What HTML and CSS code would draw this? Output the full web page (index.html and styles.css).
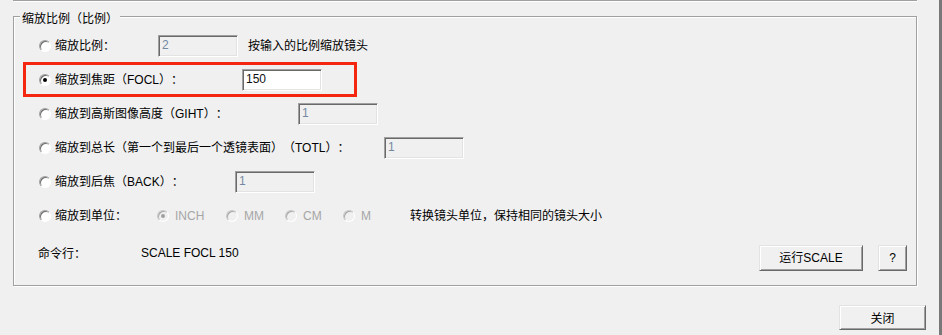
FILE: index.html
```html
<!DOCTYPE html>
<html lang="zh-CN">
<head>
<meta charset="utf-8">
<title>缩放比例</title>
<link rel="stylesheet" href="styles.css">
</head>
<body>
<div class="window">
  <div class="prev-group"></div>
  <div class="group">
    <div class="group-title">缩放比例（比例）</div>
    <div class="highlight"></div>

    <div class="row">
      <span class="radio"></span>
      <span class="label w1">缩放比例：</span>
      <span class="field disabled">2</span>
      <span class="hint">按输入的比例缩放镜头</span>
    </div>

    <div class="row">
      <span class="radio checked"></span>
      <span class="label w2">缩放到焦距（FOCL）：</span>
      <span class="field">150</span>
    </div>

    <div class="row">
      <span class="radio"></span>
      <span class="label w3">缩放到高斯图像高度（GIHT）：</span>
      <span class="field disabled">1</span>
    </div>

    <div class="row">
      <span class="radio"></span>
      <span class="label w4">缩放到总长（第一个到最后一个透镜表面）（TOTL）：</span>
      <span class="field disabled">1</span>
    </div>

    <div class="row">
      <span class="radio"></span>
      <span class="label w5">缩放到后焦（BACK）：</span>
      <span class="field disabled">1</span>
    </div>

    <div class="row">
      <span class="radio"></span>
      <span class="label w6">缩放到单位：</span>
      <span class="opt o-inch"><span class="radio dim checked"></span>INCH</span>
      <span class="opt o-mm"><span class="radio dim"></span>MM</span>
      <span class="opt o-cm"><span class="radio dim"></span>CM</span>
      <span class="opt o-m"><span class="radio dim"></span>M</span>
      <span class="unit-hint">转换镜头单位，保持相同的镜头大小</span>
    </div>

    <div class="cmd">
      <span class="cmd-label">命令行：</span>
      <span class="cmd-text">SCALE FOCL 150</span>
      <span class="btn run">运行SCALE</span>
      <span class="btn help">?</span>
    </div>
  </div>
  <div class="footer">
    <span class="btn close">关闭</span>
  </div>
</div>
</body>
</html>
```

FILE: styles.css
```css
* { box-sizing: border-box; }

html, body {
  margin: 0;
  padding: 0;
  background: #f0f0f0;
}

body {
  font-family: "Liberation Sans", "Noto Sans CJK SC", sans-serif;
  font-size: 12px;
  color: #000;
  width: 942px;
  height: 335px;
  overflow: hidden;
  text-spacing-trim: space-all;
}

.window {
  width: 942px;
  height: 335px;
  border-right: 3px solid #787878;
  background: #f0f0f0;
}

.prev-group {
  margin-left: 13px;
  width: 904px;
  height: 1px;
  background: #a0a0a0;
  box-shadow: 1px 1px 0 #ffffff;
}

.group {
  position: relative;
  margin-top: 15px;
  margin-left: 13px;
  width: 904px;
  height: 270px;
  border: 1px solid #a0a0a0;
  box-shadow: inset 1px 1px 0 #ffffff, 1px 1px 0 #ffffff;
  padding: 12px 9px 0 24px;
}

.group-title {
  position: absolute;
  left: 6px;
  top: -6px;
  padding: 0 2px;
  line-height: 17px;
  background: #f0f0f0;
}

.highlight {
  position: absolute;
  left: 9px;
  top: 45px;
  width: 334px;
  height: 35px;
  border: 3px solid #f5260f;
}

.row {
  display: flex;
  align-items: center;
  height: 34px;
  line-height: 17px;
}

.radio {
  position: relative;
  flex: none;
  width: 12px;
  height: 12px;
  border-radius: 50%;
  background: #ffffff;
  border: 1px solid;
  border-color: #a0a0a0 #ffffff #ffffff #a0a0a0;
  box-shadow: inset 1px 1px 0 #6d6d6d;
  margin-left: 1px;
  margin-right: 4px;
}

.radio.checked::after {
  content: "";
  position: absolute;
  left: 3px;
  top: 3px;
  width: 4px;
  height: 4px;
  border-radius: 50%;
  background: #000;
}

.radio.dim {
  background: #f0f0f0;
  border-color: #c8c8c8 #ffffff #ffffff #c8c8c8;
  box-shadow: inset 1px 1px 0 #a8a8a8;
  margin-left: 0;
  margin-right: 6px;
}

.radio.dim.checked::after {
  background: #a0a0a0;
}

.label { flex: none; white-space: nowrap; }
.w1 { width: 103px; }
.w2 { width: 187px; }
.w3 { width: 243px; }
.w4 { width: 329px; }
.w5 { width: 180px; }
.w6 { width: 102px; }

.field {
  flex: none;
  width: 80px;
  height: 22px;
  line-height: 18px;
  padding-left: 3px;
  background: #ffffff;
  border: 1px solid;
  border-color: #a0a0a0 #ffffff #ffffff #a0a0a0;
  box-shadow: inset 1px 1px 0 #696969, inset -1px -1px 0 #e3e3e3;
  color: #101010;
}

.field.disabled {
  background: #f0f0f0;
  color: #7389a3;
}

.hint {
  margin-left: 10px;
  white-space: nowrap;
}

.opt {
  flex: none;
  display: flex;
  align-items: center;
  color: #a6a6a6;
}
.o-inch { width: 69px; }
.o-mm { width: 59px; }
.o-cm { width: 58px; }
.o-m { width: 67px; }

.unit-hint { white-space: nowrap; }

.cmd {
  display: flex;
  align-items: flex-start;
  padding-top: 12px;
  line-height: 17px;
}

.cmd-label {
  flex: none;
  width: 103px;
  margin-top: 1px;
}

.cmd-text {
  flex: 1;
}

.btn {
  flex: none;
  display: flex;
  align-items: center;
  justify-content: center;
  background: #f0f0f0;
  border: 1px solid;
  border-color: #e3e3e3 #696969 #696969 #e3e3e3;
  box-shadow: inset 1px 1px 0 #ffffff, inset -1px -1px 0 #a0a0a0;
  color: #000;
}

.run {
  width: 104px;
  height: 26px;
}

.help {
  width: 29px;
  height: 26px;
  margin-left: 15px;
}

.footer {
  display: flex;
  justify-content: flex-end;
  padding-top: 19px;
  padding-right: 13px;
}

.close {
  width: 87px;
  height: 25px;
}
```
